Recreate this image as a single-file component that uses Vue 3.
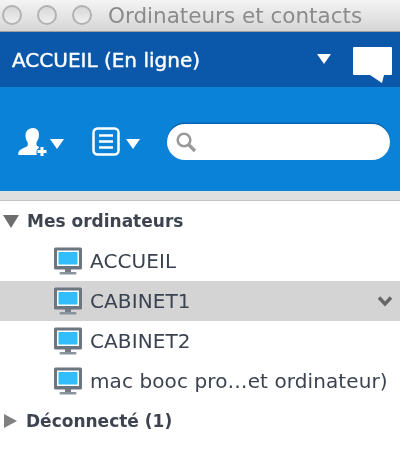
<script setup>
const computers = [
  { name: 'ACCUEIL' },
  { name: 'CABINET1', selected: true },
  { name: 'CABINET2' },
  { name: 'mac booc pro…et ordinateur)' },
]
</script>

<template>
  <div class="app">
    <header class="titlebar">
      <div class="lights"><i></i><i></i><i></i></div>
      <span class="title">Ordinateurs et contacts</span>
    </header>
    <div class="status">
      <span class="status-name">ACCUEIL (En ligne)</span>
      <span class="tri status-tri"></span>
      <svg class="chat" width="40" height="38" viewBox="0 0 40 38">
        <path d="M2 1H39Q40 1 40 2V28Q40 29 39 29H32L30 37L18 29H2Q1 29 1 28V2Q1 1 2 1Z" fill="#fff"/>
      </svg>
    </div>
    <div class="toolbar">
      <svg class="user" width="30" height="30" viewBox="0 0 30 30">
        <path d="M15 1C19 1 21 4 21 8C21 11 20 13 18.500 15V18C19 19 20 19.500 21 20V21C18.500 22 18 25 19 28H1C0 28 0 27 0.500 25.500C1.500 22 6 21 9 19.500C10 19 10 17 9.500 15C8 13 7.500 11 7.500 8C7.500 4 11 1 15 1Z" fill="#fff"/>
        <path d="M22.500 20H25.500V23H28.500V26H25.500V29H22.500V26H19.500V23H22.500Z" fill="#fff"/>
      </svg>
      <span class="tri tool-tri"></span>
      <svg class="list" width="28" height="29" viewBox="0 0 28 29">
        <rect x="1.500" y="1.500" width="25" height="26" rx="4" fill="none" stroke="#fff" stroke-width="2.500"/>
        <path d="M7 8.500H21M7 14.500H21M7 20.500H21" stroke="#fff" stroke-width="2.500"/>
      </svg>
      <span class="tri tool-tri"></span>
      <div class="search">
        <svg width="22" height="22" viewBox="0 0 22 22">
          <circle cx="9" cy="9" r="6.300" fill="none" stroke="#999" stroke-width="2.600"/>
          <path d="M13.500 13.500L20 20" stroke="#999" stroke-width="3.200"/>
        </svg>
      </div>
    </div>
    <div class="band"></div>
    <ul class="tree">
      <li class="group"><span class="arrow-down"></span>Mes ordinateurs</li>
      <li v-for="c in computers" :key="c.name" class="row" :class="{ selected: c.selected }">
        <svg width="30" height="29" viewBox="0 0 30 29">
          <rect x="1" y="0.500" width="28" height="22" rx="1.500" fill="#6b7680"/>
          <rect x="4" y="3.500" width="22" height="15.500" fill="#fff"/>
          <rect x="5.500" y="5" width="19" height="12.500" fill="#33bdfb"/>
          <rect x="12" y="22" width="6" height="3.500" fill="#737d86"/>
          <rect x="6.500" y="25" width="17" height="2.500" rx="1" fill="#8a939b"/>
        </svg>
        <span class="name">{{ c.name }}</span>
        <svg v-if="c.selected" class="chev" width="16" height="12" viewBox="0 0 16 12">
          <path d="M2 2.500L8 9L14 2.500" fill="none" stroke="#666" stroke-width="3.400"/>
        </svg>
      </li>
      <li class="group"><span class="arrow-right"></span>Déconnecté (1)</li>
    </ul>
  </div>
</template>

<style>
html, body { margin: 0; background: #fff; }
</style>

<style scoped>
.app {
  width: 400px;
  height: 452px;
  overflow: hidden;
  display: flex;
  flex-direction: column;
  font-family: "DejaVu Sans", sans-serif;
  background: #fff;
  filter: blur(0.45px);
}
.titlebar {
  height: 32px;
  flex: none;
  box-sizing: border-box;
  display: flex;
  align-items: center;
  padding: 0 0 1px 2px;
  background: linear-gradient(#f4f4f4, #d6d6d6);
  border-bottom: 1px solid #a0a0a0;
}
.lights { display: flex; gap: 15px; }
.lights i {
  width: 20px;
  height: 20px;
  box-sizing: border-box;
  border-radius: 50%;
  border: 2px solid #b2b2b2;
  background: linear-gradient(#d8d8d8, #f0f0f0);
}
.title {
  margin-left: 16px;
  font-size: 21.500px;
  color: #8b8b8b;
  white-space: nowrap;
}
.status {
  height: 55px;
  flex: none;
  display: flex;
  align-items: center;
  padding: 0 8px 0 12px;
  background: #0b57a9;
  color: #fff;
}
.status-name {
  font-size: 20px;
  -webkit-text-stroke: 0.4px #fff;
  white-space: nowrap;
}
.status-tri { margin-left: auto; margin-right: 21px; margin-top: -2px; }
.chat { margin-top: 11px; }
.tri {
  width: 0;
  height: 0;
  border-left: 7px solid transparent;
  border-right: 7px solid transparent;
  border-top: 10px solid #fff;
}
.toolbar {
  height: 104px;
  flex: none;
  box-sizing: border-box;
  display: flex;
  align-items: center;
  padding: 5px 10px 0 18px;
  background: #0a82d8;
}
.toolbar .user { margin-right: 2px; }
.tool-tri { margin-top: 4px; }
.toolbar .list { margin-left: 28px; margin-right: 6px; }
.search {
  margin-left: 27px;
  flex: 1;
  height: 36px;
  box-sizing: border-box;
  display: flex;
  align-items: center;
  padding-left: 8px;
  background: #fff;
  border-radius: 18px;
  box-shadow: 0 -1.500px 0 #0a62ad;
}
.band {
  height: 10px;
  flex: none;
  box-sizing: border-box;
  background: #dfdfdf;
  border-bottom: 1px solid #c4c4c4;
}
.tree { list-style: none; margin: 0; padding: 0; }
.group, .row {
  height: 40px;
  box-sizing: border-box;
  display: flex;
  align-items: center;
}
.group {
  padding-left: 3px;
  font-size: 17px;
  font-weight: 700;
  color: #3d4450;
}
.arrow-down {
  width: 0;
  height: 0;
  margin-right: 8px;
  border-left: 8px solid transparent;
  border-right: 8px solid transparent;
  border-top: 13px solid #6d6d6d;
}
.arrow-right {
  width: 0;
  height: 0;
  margin-left: 1px;
  margin-right: 9px;
  border-top: 7.500px solid transparent;
  border-bottom: 7.500px solid transparent;
  border-left: 13px solid #808080;
}
.row {
  padding-left: 53px;
  padding-right: 7px;
  font-size: 20px;
  color: #3b4350;
}
.row.selected { background: #d4d4d4; }
.name { margin-left: 7px; white-space: nowrap; letter-spacing: 0.1px; }
.chev { margin-left: auto; }
</style>
